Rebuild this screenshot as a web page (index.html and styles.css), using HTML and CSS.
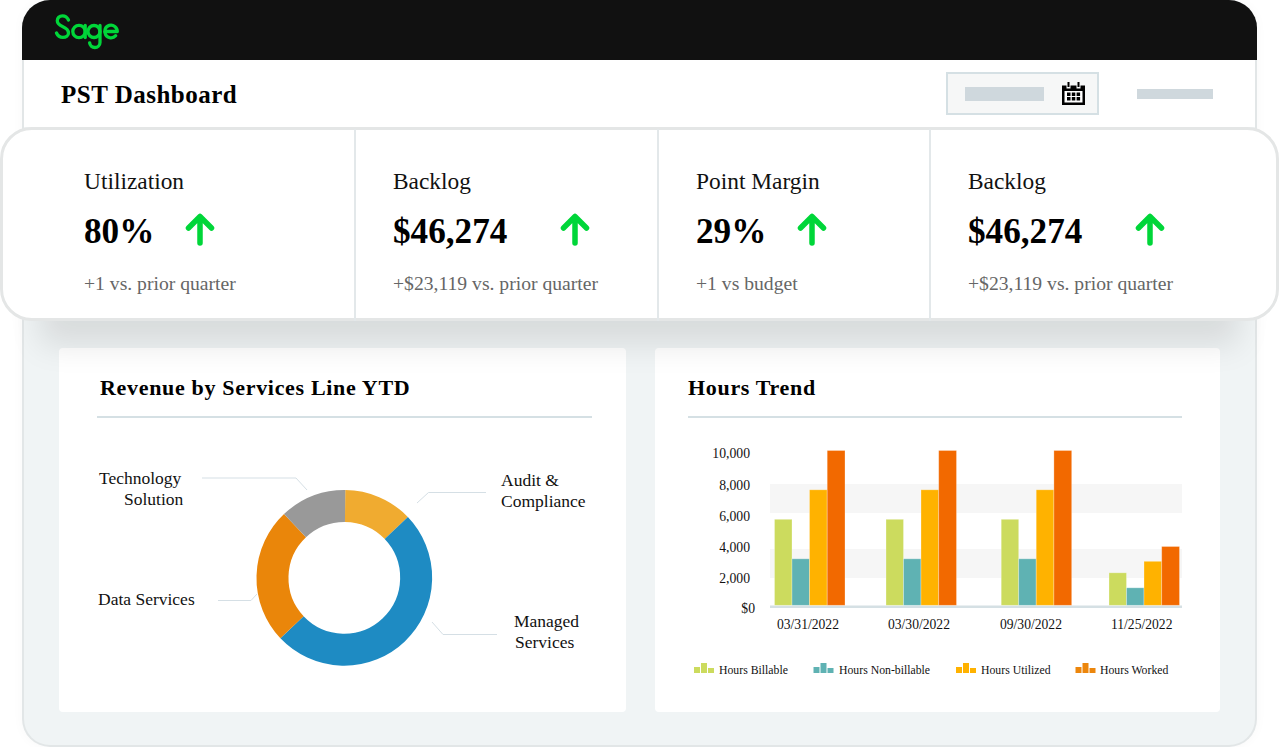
FILE: index.html
```html
<!DOCTYPE html>
<html lang="en">
<head>
<meta charset="utf-8">
<title>PST Dashboard</title>
<link rel="stylesheet" href="styles.css">
</head>
<body>
<div class="frame">
  <header class="topbar">
    <svg class="logo" width="66" height="37" viewBox="0 0 66 37" fill="none" stroke="#00d639" stroke-width="3.3" stroke-linecap="round" stroke-linejoin="round" role="img" aria-label="Sage">
      <path d="M14.500 6C13.300 3.400 11.300 1.800 8.500 1.800 5.300 1.800 3.300 4 3.300 6.800 3.300 9.800 5.500 11.200 8.500 12.500 11.900 14 14.500 15.600 14.500 19 14.500 21.600 12.100 23.400 8.900 23.400 5.900 23.400 3.700 21.800 2.500 19"/>
      <circle cx="25" cy="17.500" r="6.200"/>
      <path d="M31.200 11.500V23.600"/>
      <circle cx="40" cy="17.500" r="6"/>
      <path d="M46 11.500V28.500C46 31.300 43.600 33.500 40.800 33.500 38.200 33.500 36 31.500 35.600 28.800"/>
      <path d="M50.700 17.500H63.300A6.300 6.300 0 1 0 61.700 21.700"/>
    </svg>
  </header>
  <section class="titlebar">
    <h1 class="page-title">PST Dashboard</h1>
    <div class="datebox">
      <span class="ph ph-date"></span>
      <svg class="cal" width="23" height="23" viewBox="0 0 23 23">
        <path d="M0 3.500h4.500v3h4v-3h6v3h4v-3H23V23H0Z" fill="#000"/>
        <path d="M5.500 0h2v5h-2ZM15.500 0h2v5h-2Z" fill="#000"/>
        <path d="M2.500 9h18v11.500h-18Z" fill="#fff"/>
        <path d="M5 10.500h3.500v3.500H5Zm4.800 0h3.500v3.500H9.800Zm4.800 0h3.500v3.500h-3.500ZM5 15h3.500v3.500H5Zm4.800 0h3.500v3.500H9.800Zm4.800 0h3.500v3.500h-3.500Z" fill="#000"/>
      </svg>
    </div>
    <span class="ph ph-link"></span>
  </section>

  <section class="kpis">
    <article class="kpi kpi-1">
      <h2 class="kpi-label">Utilization</h2>
      <div class="kpi-row"><strong class="kpi-value">80%</strong><svg class="arrow arrow-1" width="30" height="34" viewBox="0 0 30 34"><path d="M15 30V4M3.500 15 15 3.500 26.500 15" fill="none" stroke="#00d639" stroke-width="5.500" stroke-linecap="round" stroke-linejoin="round"/></svg></div>
      <p class="kpi-note">+1 vs. prior quarter</p>
    </article>
    <article class="kpi kpi-2">
      <h2 class="kpi-label">Backlog</h2>
      <div class="kpi-row"><strong class="kpi-value">$46,274</strong><svg class="arrow arrow-2" width="30" height="34" viewBox="0 0 30 34"><path d="M15 30V4M3.500 15 15 3.500 26.500 15" fill="none" stroke="#00d639" stroke-width="5.500" stroke-linecap="round" stroke-linejoin="round"/></svg></div>
      <p class="kpi-note">+$23,119 vs. prior quarter</p>
    </article>
    <article class="kpi kpi-3">
      <h2 class="kpi-label">Point Margin</h2>
      <div class="kpi-row"><strong class="kpi-value">29%</strong><svg class="arrow arrow-3" width="30" height="34" viewBox="0 0 30 34"><path d="M15 30V4M3.500 15 15 3.500 26.500 15" fill="none" stroke="#00d639" stroke-width="5.500" stroke-linecap="round" stroke-linejoin="round"/></svg></div>
      <p class="kpi-note">+1 vs budget</p>
    </article>
    <article class="kpi kpi-4">
      <h2 class="kpi-label">Backlog</h2>
      <div class="kpi-row"><strong class="kpi-value">$46,274</strong><svg class="arrow arrow-4" width="30" height="34" viewBox="0 0 30 34"><path d="M15 30V4M3.500 15 15 3.500 26.500 15" fill="none" stroke="#00d639" stroke-width="5.500" stroke-linecap="round" stroke-linejoin="round"/></svg></div>
      <p class="kpi-note">+$23,119 vs. prior quarter</p>
    </article>
  </section>

  <main class="panels">
    <section class="panel panel-rev">
      <h2 class="panel-title"><span class="title-text">Revenue by Services Line YTD</span></h2>
      <svg class="chart" width="567" height="294" viewBox="59 418 567 294">
        <g fill="none" stroke-width="32">
          <path d="M345.100 506A72 72 0 0 1 396.300 528" stroke="#f0ab30"/>
          <path d="M396.300 528A72 72 0 1 1 292 627.300" stroke="#1e8bc3"/>
          <path d="M292 627.300A72 72 0 0 1 295 525.700" stroke="#ea860a"/>
          <path d="M295 525.700A72 72 0 0 1 345.100 506" stroke="#999999"/>
        </g>
        <g fill="none" stroke="#d5dfe5">
          <path d="M202 478H296L307 490"/>
          <path d="M417 503 428.500 492.500H486"/>
          <path d="M218 600.500H251L257 594"/>
          <path d="M432 622 443 634.500H497"/>
        </g>
        <g class="chart-label">
          <text x="99" y="484">Technology</text>
          <text x="124" y="505">Solution</text>
          <text x="501" y="486">Audit &amp;</text>
          <text x="501" y="507">Compliance</text>
          <text x="98" y="605">Data Services</text>
          <text x="514" y="627">Managed</text>
          <text x="515" y="648">Services</text>
        </g>
      </svg>
    </section>
    <section class="panel panel-hours">
      <h2 class="panel-title">Hours Trend</h2>
      <svg class="chart" width="565" height="294" viewBox="655 418 565 294">
        <rect class="band" x="770" y="484" width="412" height="29"/>
        <rect class="band" x="770" y="549" width="412" height="29"/>
        <rect x="770" y="605.500" width="412" height="2.500" fill="#d5e0e4"/>
        <g class="axis">
          <text x="750" y="458">10,000</text>
          <text x="750" y="490">8,000</text>
          <text x="750" y="521">6,000</text>
          <text x="750" y="552">4,000</text>
          <text x="750" y="583">2,000</text>
          <text x="755" y="613">$0</text>
        </g>
        <g class="bars">
          <g class="bar-green"><rect x="774.500" y="519.300" width="17.500" height="86"/><rect x="886" y="519.300" width="17.500" height="86"/><rect x="1001.200" y="519.300" width="17.500" height="86"/><rect x="1109" y="572.800" width="17.500" height="32.500"/></g>
          <g class="bar-teal"><rect x="792" y="558.800" width="17.500" height="46.500"/><rect x="903.500" y="558.800" width="17.500" height="46.500"/><rect x="1018.700" y="558.800" width="17.500" height="46.500"/><rect x="1126.500" y="587.800" width="17.500" height="17.500"/></g>
          <g class="bar-amber"><rect x="809.500" y="489.800" width="17.700" height="115.500"/><rect x="921" y="489.800" width="17.700" height="115.500"/><rect x="1036.200" y="489.800" width="17.700" height="115.500"/><rect x="1144" y="561.300" width="17.700" height="44"/></g>
          <g class="bar-orange"><rect x="827.200" y="450.500" width="17.800" height="154.800"/><rect x="938.700" y="450.500" width="17.800" height="154.800"/><rect x="1053.900" y="450.500" width="17.800" height="154.800"/><rect x="1161.700" y="546.500" width="17.800" height="58.800"/></g>
        </g>
        <g class="tick">
          <text x="777" y="629">03/31/2022</text>
          <text x="888" y="629">03/30/2022</text>
          <text x="1000" y="629">09/30/2022</text>
          <text x="1111" y="629">11/25/2022</text>
        </g>
        <g class="legend">
          <path class="bar-green" d="M694 667h6v6h-6ZM701 663h6v10h-6ZM708 668h6v5h-6Z"/>
          <text x="719" y="674">Hours Billable</text>
          <path class="bar-teal" d="M813.500 667h6v6h-6ZM820.500 663h6v10h-6ZM827.500 668h6v5h-6Z"/>
          <text x="839" y="674">Hours Non-billable</text>
          <path class="bar-amber" d="M956 667h6v6h-6ZM963 663h6v10h-6ZM970 668h6v5h-6Z"/>
          <text x="981" y="674">Hours Utilized</text>
          <path class="bar-deep" d="M1075.500 667h6v6h-6ZM1082.500 663h6v10h-6ZM1089.500 668h6v5h-6Z"/>
          <text x="1100" y="674">Hours Worked</text>
        </g>
      </svg>
    </section>
  </main>
</div>
</body>
</html>
```

FILE: styles.css
```css
* { box-sizing: border-box; }
html, body { margin: 0; padding: 0; }
body {
  width: 1280px;
  height: 747px;
  overflow: hidden;
  background: #fff;
  font-family: "Liberation Serif", "Times New Roman", serif;
  color: #000;
}
.frame {
  width: 1235px;
  height: 747px;
  margin-left: 22px;
  border-radius: 28px;
  background: #f0f4f5;
  border: 2px solid #e2e6e7;
  border-top: 0;
  box-shadow: 0 0 12px rgba(0, 0, 0, 0.03);
  display: flex;
  flex-direction: column;
}
.topbar {
  height: 60px;
  margin: 0 -2px;
  flex: none;
  background: #111;
  border-radius: 28px 28px 0 0;
  padding: 14px 0 0 32px;
}
.logo { display: block; }
.titlebar {
  height: 67px;
  flex: none;
  background: #fff;
  display: flex;
  align-items: center;
  padding: 0 42px 0 37px;
}
.page-title {
  margin: 0;
  font-size: 25px;
  font-weight: 700;
  letter-spacing: 0.5px;
  flex: 1;
  position: relative;
  top: 1px;
}
.datebox {
  width: 153px;
  height: 43px;
  margin-right: 38px;
  padding: 0 12px 0 17px;
  background: #f6f7f7;
  border: 2px solid #d5e0e4;
  display: flex;
  align-items: center;
  justify-content: space-between;
}
.ph { display: block; background: #cfd8dd; }
.ph-date { width: 79px; height: 14px; }
.ph-link { width: 76px; height: 10px; }
.cal { display: block; }
.kpis {
  margin: 0 -24px;
  height: 194px;
  flex: none;
  background: #fff;
  border: 3px solid #e4e6e6;
  border-radius: 32px;
  display: flex;
  box-shadow: 0 64px 30px -40px rgba(0, 0, 0, 0.1);
  position: relative;
  z-index: 1;
}
.kpi {
  position: relative;
  padding: 38px 0 0;
}
.kpi + .kpi::before {
  content: "";
  position: absolute;
  left: 0;
  top: -1px;
  bottom: -3px;
  width: 2px;
  background: #e3e8ea;
}
.kpi-1 { width: 351px; padding-left: 81px; }
.kpi-2 { width: 303px; padding-left: 39px; }
.kpi-3 { width: 272px; padding-left: 39px; }
.kpi-4 { flex: 1; padding-left: 39px; }
.kpi-label {
  margin: 0;
  font-size: 23.4px;
  line-height: 26px;
  font-weight: 400;
  color: #111;
}
.kpi-row {
  display: flex;
  align-items: center;
  height: 36px;
  margin-top: 20px;
}
.kpi-value { font-size: 35.2px; line-height: 36px; font-weight: 700; }
.arrow { display: block; flex: none; margin-bottom: 4px; }
.arrow-1 { margin-left: 31px; }
.arrow-2 { margin-left: 53px; }
.arrow-3 { margin-left: 31px; }
.arrow-4 { margin-left: 53px; }
.kpi-note {
  margin: 22px 0 0;
  font-size: 19.65px;
  line-height: 22px;
  color: #666;
}
.panels {
  display: flex;
  gap: 29px;
  padding: 27px 35px 0 35px;
}
.panel {
  background: #fff;
  border-radius: 4px;
  height: 364px;
  width: 567px;
  padding-top: 27px;
}
.panel-hours { width: 565px; }
.panel-title {
  margin: 0 34px 0 38px;
  height: 43px;
  border-bottom: 2px solid #d5e0e4;
  font-size: 22px;
  line-height: 25px;
  font-weight: 700;
  letter-spacing: 0.68px;
}
.title-text { display: block; padding-left: 3px; }
.panel-hours .panel-title { margin: 0 38px 0 33px; }
.chart { display: block; }
.chart text { font-family: "Liberation Serif", "Times New Roman", serif; fill: #111; }
.chart-label text { font-size: 17.5px; }
.axis text { font-size: 13.7px; text-anchor: end; }
.tick text { font-size: 13.6px; }
.legend text { font-size: 11.75px; }
.band { fill: #f6f6f6; }
.bars rect { stroke: rgba(255, 255, 255, 0.35); stroke-width: 0.8; }
.bar-green { fill: #ccdb5e; }
.bar-teal { fill: #5fb2b3; }
.bar-amber { fill: #ffb200; }
.bar-orange { fill: #f26900; }
.bar-deep { fill: #ec860c; }
```
